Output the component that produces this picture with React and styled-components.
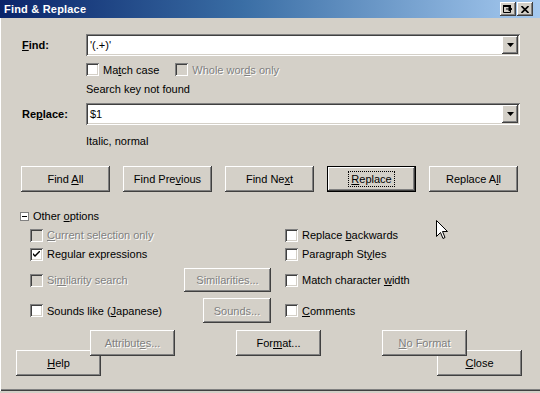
import React from "react";
import styled, { createGlobalStyle, css } from "styled-components";

const GlobalStyle = createGlobalStyle`
  html, body {
    margin: 0;
    padding: 0;
    background: #d4d0c8;
  }
  body {
    font-family: "Liberation Sans", Arial, sans-serif;
    font-size: 11px;
    color: #000;
  }
`;

const raised = css`
  background: #d4d0c8;
  box-shadow: inset -1px -1px #404040, inset 1px 1px #ffffff,
    inset -2px -2px #808080, inset 2px 2px #d4d0c8;
`;

const sunken = css`
  box-shadow: inset 1px 1px #808080, inset -1px -1px #ffffff,
    inset 2px 2px #404040, inset -2px -2px #d4d0c8;
`;

const disabledText = css`
  color: #808080;
  text-shadow: 1px 1px #ffffff;
`;

const Window = styled.div`
  position: relative;
  width: 540px;
  height: 391px;
  background: #d4d0c8;
  box-shadow: inset 1px 0 #ffffff, inset 0 -1px #404040, inset 0 -2px #808080;
  overflow: hidden;
`;

const TitleBar = styled.div`
  height: 18px;
  display: flex;
  align-items: center;
  padding: 0 7px 0 4px;
  background: linear-gradient(to right, #0a246a 0%, #3a6ea5 45%, #a6caf0 100%);
`;

const Title = styled.div`
  flex: 1;
  color: #fff;
  font-weight: bold;
  font-size: 11px;
  letter-spacing: 0.2px;
`;

const CaptionButton = styled.div`
  ${raised};
  width: 16px;
  height: 14px;
  display: flex;
  align-items: center;
  justify-content: center;
  margin-left: ${(p) => p.$gap || 0}px;
`;

const Body = styled.div`
  display: flex;
  flex-direction: column;
`;

const FieldRow = styled.div`
  display: flex;
  align-items: center;
  height: 22px;
  margin-top: ${(p) => p.$top}px;
  padding-left: 22px;
`;

const FieldLabel = styled.div`
  width: 64px;
  font-weight: bold;
`;

const Combo = styled.div`
  ${sunken};
  background: #fff;
  width: 434px;
  height: 22px;
  box-sizing: border-box;
  display: flex;
  align-items: center;
  padding: 2px 2px 2px 4px;
`;

const ComboText = styled.div`
  flex: 1;
  font-size: 11px;
`;

const DropButton = styled.div`
  ${raised};
  width: 16px;
  height: 18px;
  display: flex;
  align-items: center;
  justify-content: center;
`;

const SubRow = styled.div`
  display: flex;
  align-items: center;
  height: ${(p) => p.$height || 14}px;
  margin-top: ${(p) => p.$top}px;
  padding-left: ${(p) => p.$left || 86}px;
  ${(p) => p.$disabled && disabledText};
`;

const Check = styled.label`
  display: flex;
  align-items: center;
  white-space: pre;
  margin-right: ${(p) => p.$after || 0}px;
  ${(p) => p.$disabled && disabledText};
`;

const Box = styled.span`
  ${sunken};
  width: 13px;
  height: 13px;
  box-sizing: border-box;
  background: ${(p) => (p.$disabled ? "#d4d0c8" : "#fff")};
  display: inline-flex;
  align-items: center;
  justify-content: center;
  margin-right: 4px;
  flex: none;
`;

const U = styled.span`
  text-decoration: underline;
`;

const ButtonRow = styled.div`
  display: flex;
  gap: ${(p) => p.$gap || 0}px;
  margin-top: ${(p) => p.$top}px;
  padding-left: ${(p) => p.$left}px;
  padding-right: ${(p) => p.$right || 0}px;
  position: relative;
  z-index: ${(p) => p.$z || 0};
`;

const Button = styled.div`
  ${raised};
  width: ${(p) => p.$w}px;
  height: ${(p) => p.$h || 26}px;
  box-sizing: border-box;
  display: flex;
  align-items: center;
  justify-content: center;
  white-space: pre;
  flex: none;
  margin-left: ${(p) => (p.$push ? "auto" : `${p.$ml || 0}px`)};
  ${(p) => p.$disabled && disabledText};
  ${(p) =>
    p.$default &&
    css`
      box-shadow: inset 0 0 0 1px #000, inset -2px -2px #404040,
        inset 2px 2px #ffffff, inset -3px -3px #808080;
    `};
`;

const Focus = styled.span`
  outline: 1px dotted #000;
  outline-offset: 1px;
  padding: 0 1px;
`;

const ToggleHead = styled.div`
  display: flex;
  align-items: center;
  height: 14px;
  margin-top: 17px;
  padding-left: 20px;
`;

const ToggleBox = styled.span`
  width: 9px;
  height: 9px;
  box-sizing: border-box;
  border: 1px solid #808080;
  background: #fff;
  display: inline-flex;
  align-items: center;
  justify-content: center;
  margin-right: 4px;
`;

const Minus = styled.span`
  width: 5px;
  height: 1px;
  background: #000;
`;

const OptionRow = styled.div`
  display: grid;
  grid-template-columns: 255px 1fr;
  align-items: center;
  height: ${(p) => p.$height}px;
  margin-top: ${(p) => p.$top}px;
  padding-left: 30px;
`;

const Cell = styled.div`
  display: flex;
  align-items: center;
  padding-right: 14px;
`;

const CheckMark = () => (
  <svg width="7" height="7" viewBox="0 0 7 7">
    <path d="M0 2 L0 4 L2 6 L7 1 L7 -1 L2 4 Z" fill="#000" />
  </svg>
);

const Triangle = () => (
  <svg width="7" height="4" viewBox="0 0 7 4">
    <path d="M0 0 H7 L3.5 4 Z" fill="#000" />
  </svg>
);

function CheckItem({ checked, disabled, children, after }) {
  return (
    <Check $disabled={disabled} $after={after}>
      <Box $disabled={disabled}>{checked && <CheckMark />}</Box>
      <span>{children}</span>
    </Check>
  );
}

const Cursor = styled.svg`
  position: absolute;
  left: 436px;
  top: 220px;
`;

export default function App() {
  return (
    <>
      <GlobalStyle />
      <Window>
        <TitleBar>
          <Title>Find &amp; Replace</Title>
          <CaptionButton>
            <svg width="10" height="8" viewBox="0 0 10 8">
              <path d="M0.5 0.5 H7.5 V7.5 H0.5 Z" fill="none" stroke="#000" />
              <path d="M0 1 H8" stroke="#000" strokeWidth="2" />
              <path d="M3 4 H8 M6 2 L9 4 L6 6 Z" stroke="#000" fill="#000" />
            </svg>
          </CaptionButton>
          <CaptionButton $gap={1}>
            <svg width="8" height="7" viewBox="0 0 8 7">
              <path d="M0.5 0 L7.5 7 M7.5 0 L0.5 7" stroke="#000" strokeWidth="1.6" />
            </svg>
          </CaptionButton>
        </TitleBar>

        <Body>
          <FieldRow $top={16}>
            <FieldLabel>
              <U>F</U>ind:
            </FieldLabel>
            <Combo>
              <ComboText>'(.+)'</ComboText>
              <DropButton>
                <Triangle />
              </DropButton>
            </Combo>
          </FieldRow>

          <SubRow $top={7} $height={13}>
            <CheckItem after={16}>
              Ma<U>t</U>ch case
            </CheckItem>
            <CheckItem disabled>
              Whole wor<U>d</U>s only
            </CheckItem>
          </SubRow>

          <SubRow $top={6}>Search key not found</SubRow>

          <FieldRow $top={7}>
            <FieldLabel>
              Re<U>p</U>lace:
            </FieldLabel>
            <Combo>
              <ComboText>$1</ComboText>
              <DropButton>
                <Triangle />
              </DropButton>
            </Combo>
          </FieldRow>

          <SubRow $top={9}>Italic, normal</SubRow>

          <ButtonRow $top={18} $left={21} $gap={13}>
            <Button $w={89}>
              <span>
                Find <U>A</U>ll
              </span>
            </Button>
            <Button $w={89}>
              <span>
                Find Pre<U>v</U>ious
              </span>
            </Button>
            <Button $w={89}>
              <span>
                Find Ne<U>x</U>t
              </span>
            </Button>
            <Button $w={89} $default>
              <Focus>
                <U>R</U>eplace
              </Focus>
            </Button>
            <Button $w={89}>
              <span>
                Replace A<U>l</U>l
              </span>
            </Button>
          </ButtonRow>

          <ToggleHead>
            <ToggleBox>
              <Minus />
            </ToggleBox>
            <span>
              Other <U>o</U>ptions
            </span>
          </ToggleHead>

          <OptionRow $top={5} $height={14}>
            <Cell>
              <CheckItem disabled>
                <U>C</U>urrent selection only
              </CheckItem>
            </Cell>
            <CheckItem>
              Replace <U>b</U>ackwards
            </CheckItem>
          </OptionRow>

          <OptionRow $top={5} $height={14}>
            <Cell>
              <CheckItem checked>
                Re<U>g</U>ular expressions
              </CheckItem>
            </Cell>
            <CheckItem>
              Paragraph St<U>y</U>les
            </CheckItem>
          </OptionRow>

          <OptionRow $top={7} $height={24}>
            <Cell>
              <CheckItem disabled>
                Si<U>m</U>ilarity search
              </CheckItem>
              <Button $w={87} $h={24} $push $disabled>
                Similarities...
              </Button>
            </Cell>
            <CheckItem>
              Match character <U>w</U>idth
            </CheckItem>
          </OptionRow>

          <OptionRow $top={6} $height={25}>
            <Cell>
              <CheckItem>
                Sounds like (<U>J</U>apanese)
              </CheckItem>
              <Button $w={68} $h={25} $push $disabled>
                Sounds...
              </Button>
            </Cell>
            <CheckItem>
              <U>C</U>omments
            </CheckItem>
          </OptionRow>

          <ButtonRow $top={7} $left={90} $z={1}>
            <Button $w={85} $disabled>
              <span>
                Attribut<U>e</U>s...
              </span>
            </Button>
            <Button $w={85} $ml={61}>
              <span>
                For<U>m</U>at...
              </span>
            </Button>
            <Button $w={85} $ml={61} $disabled>
              <span>
                <U>N</U>o Format
              </span>
            </Button>
          </ButtonRow>

          <ButtonRow $top={-6} $left={16} $right={18}>
            <Button $w={85}>
              <span>
                <U>H</U>elp
              </span>
            </Button>
            <Button $w={85} $push>
              <span>
                <U>C</U>lose
              </span>
            </Button>
          </ButtonRow>
        </Body>

        <Cursor width="12" height="20" viewBox="0 0 12 20">
          <path
            d="M0.5 0.5 V16.5 L4.5 12.5 L7 18.5 L9 17.5 L6.5 11.5 H11.5 Z"
            fill="#fff"
            stroke="#000"
            strokeLinejoin="miter"
          />
        </Cursor>
      </Window>
    </>
  );
}
